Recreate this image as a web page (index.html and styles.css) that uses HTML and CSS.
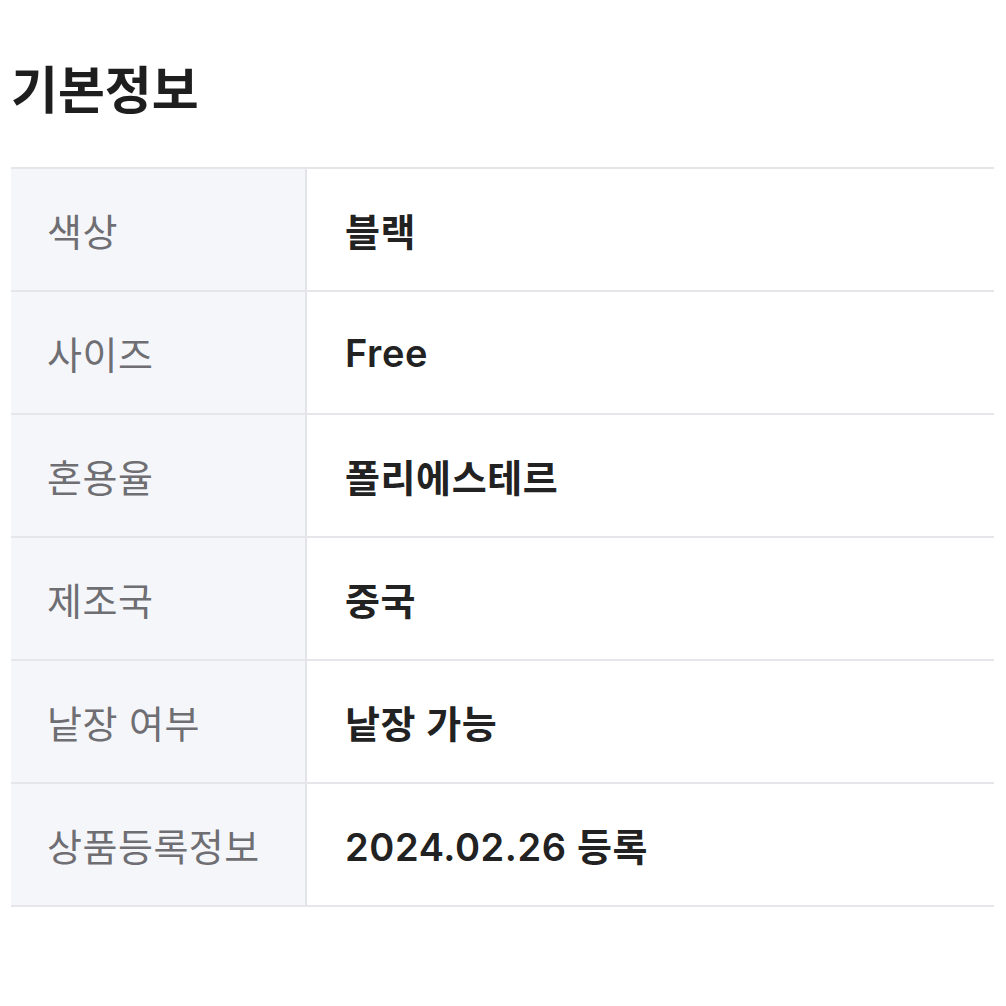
FILE: index.html
```html
<!DOCTYPE html>
<html lang="ko">
<head>
<meta charset="utf-8">
<link rel="stylesheet" href="styles.css">
</head>
<body>
<section class="info">
  <h2 class="title">기본정보</h2>
  <div class="table">
    <div class="row"><div class="label">색상</div><div class="value">블랙</div></div>
    <div class="row"><div class="label">사이즈</div><div class="value">Free</div></div>
    <div class="row"><div class="label">혼용율</div><div class="value">폴리에스테르</div></div>
    <div class="row"><div class="label">제조국</div><div class="value">중국</div></div>
    <div class="row"><div class="label">낱장 여부</div><div class="value">낱장 가능</div></div>
    <div class="row"><div class="label">상품등록정보</div><div class="value">2024.02.26 등록</div></div>
  </div>
</section>
</body>
</html>
```

FILE: styles.css
```css
html, body {
  margin: 0;
  padding: 0;
  background: #ffffff;
}
body {
  font-family: Inter, "Noto Sans CJK KR", sans-serif;
  color: #222;
}
.info {
  padding: 58px 12px 0 11px;
}
.title {
  margin: 0;
  font-size: 51px;
  line-height: 66px;
  font-weight: 700;
  color: #1e1e1e;
}
.table {
  margin-top: 43px;
  border-top: 2px solid #e6e6ea;
}
.row {
  display: grid;
  grid-template-columns: 296px 1fr;
  height: 121px;
  border-bottom: 2px solid #e6e6ea;
}
.label {
  background: #f5f6fa;
  border-right: 2px solid #e3e4e9;
  display: flex;
  align-items: center;
  padding-left: 36px;
  font-size: 38px;
  letter-spacing: 0.5px;
  color: #6e6e73;
  font-weight: 400;
}
.value {
  display: flex;
  align-items: center;
  padding-left: 38px;
  font-size: 38px;
  letter-spacing: 0.6px;
  font-weight: 600;
  color: #222;
}
```
